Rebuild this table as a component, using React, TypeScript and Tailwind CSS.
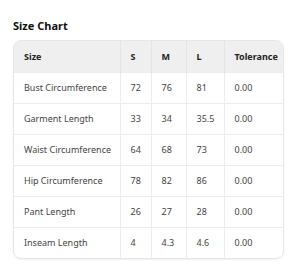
import React from "react";

const rows: [string, string, string, string, string][] = [
  ["Bust Circumference", "72", "76", "81", "0.00"],
  ["Garment Length", "33", "34", "35.5", "0.00"],
  ["Waist Circumference", "64", "68", "73", "0.00"],
  ["Hip Circumference", "78", "82", "86", "0.00"],
  ["Pant Length", "26", "27", "28", "0.00"],
  ["Inseam Length", "4", "4.3", "4.6", "0.00"],
];

export default function App() {
  return (
    <div className="w-[300px] h-[266px] bg-white px-[13px] pt-[19px]" style={{ fontFamily: '"Noto Sans", "Open Sans", sans-serif' }}>
      <h2 className="text-[11px] font-bold text-[#111] leading-[14px] mb-[7px]">Size Chart</h2>
      <div className="w-[271px] rounded-[8px] border border-[#e6e6e6] overflow-hidden shadow-[0_1px_2px_rgba(0,0,0,0.06)]">
        <table className="w-full border-collapse table-fixed text-[9px] text-[#444]">
          <colgroup>
            <col className="w-[106px]" />
            <col className="w-[31px]" />
            <col className="w-[35px]" />
            <col className="w-[38px]" />
            <col className="w-[61px]" />
          </colgroup>
          <thead>
            <tr className="bg-[#efefef] h-[31px]">
              {["Size", "S", "M", "L", "Tolerance"].map((h, i) => (
                <th
                  key={h}
                  className={`text-left font-bold text-[#222] pl-[10px] p-0 ${i > 0 ? "border-l border-[#e3e3e3]" : ""}`}
                >
                  {h}
                </th>
              ))}
            </tr>
          </thead>
          <tbody>
            {rows.map((r) => (
              <tr key={r[0]} className="h-[31px] border-t border-[#ececec]">
                {r.map((c, i) => (
                  <td
                    key={i}
                    className={`pl-[10px] p-0 ${i > 0 ? "border-l border-[#ececec]" : ""}`}
                  >
                    {c}
                  </td>
                ))}
              </tr>
            ))}
          </tbody>
        </table>
      </div>
    </div>
  );
}
